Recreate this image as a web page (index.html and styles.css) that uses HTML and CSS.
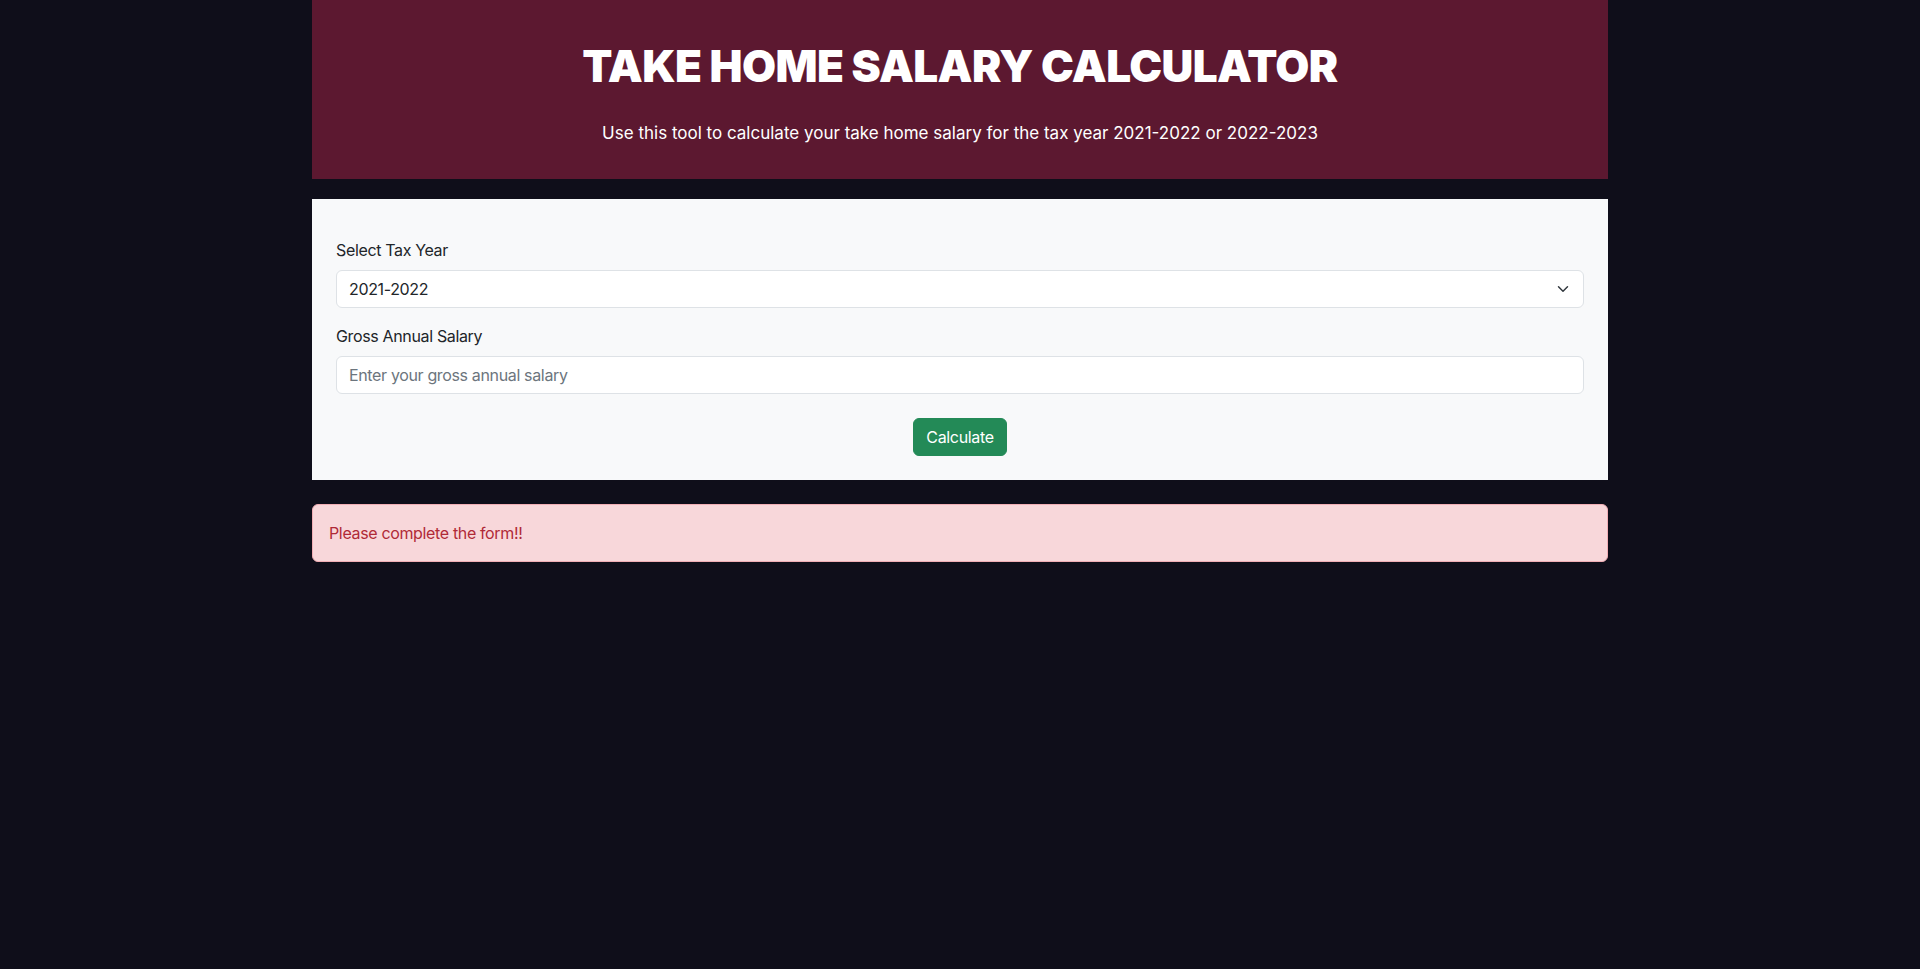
FILE: index.html
```html
<!DOCTYPE html>
<html lang="en">
<head>
<meta charset="utf-8">
<title>Take Home Salary Calculator</title>
<link rel="stylesheet" href="styles.css">
</head>
<body>
<div class="container">
  <header class="hero">
    <h1 class="hero-title">TAKE HOME SALARY CALCULATOR</h1>
    <p class="hero-sub">Use this tool to calculate your take home salary for the tax year 2021-2022 or 2022-2023</p>
  </header>

  <form class="calc-card">
    <div class="field">
      <label class="field-label" for="year">Select Tax Year</label>
      <select id="year" class="field-select">
        <option>2021-2022</option>
        <option>2022-2023</option>
      </select>
    </div>
    <div class="field">
      <label class="field-label" for="salary">Gross Annual Salary</label>
      <input id="salary" class="field-input" type="text" placeholder="Enter your gross annual salary">
    </div>
    <div class="actions">
      <button type="button" class="btn-calc">Calculate</button>
    </div>
  </form>

  <div class="alert">Please complete the form!!</div>
</div>
</body>
</html>
```

FILE: styles.css
```css
* { box-sizing: border-box; }

html, body {
  margin: 0;
  padding: 0;
}

body {
  background: #0f0e1a;
  font-family: Inter, "Noto Sans", "Liberation Sans", sans-serif;
  font-size: 16px;
  line-height: 1.5;
  letter-spacing: -0.35px;
  color: #212529;
  min-height: 969px;
}

.container {
  width: 1296px;
  margin: 0 auto;
}

.hero {
  background: #5c1830;
  color: #ffffff;
  text-align: center;
  padding: 40px 24px 32px;
  letter-spacing: normal;
}

.hero-title {
  margin: 0 0 27px;
  font-size: 44px;
  line-height: 1.2;
  font-weight: 900;
  letter-spacing: -0.6px;
}

.hero-sub {
  margin: 0;
  font-size: 17px;
  line-height: 27px;
  font-weight: 400;
}

.calc-card {
  margin-top: 20px;
  background: #f8f9fa;
  padding: 39px 24px 24px;
}

.field {
  margin-bottom: 16px;
}

.field-label {
  display: block;
  margin-bottom: 8px;
  font-size: 16px;
  line-height: 24px;
}

.field-select,
.field-input {
  display: block;
  width: 100%;
  height: 38px;
  padding: 6px 12px;
  font-family: inherit;
  font-size: 16px;
  line-height: 24px;
  letter-spacing: -0.35px;
  color: #212529;
  background-color: #ffffff;
  border: 1px solid #dee2e6;
  border-radius: 6px;
  outline: none;
}

.field-select {
  -webkit-appearance: none;
  appearance: none;
  padding-right: 36px;
  background-image: url("data:image/svg+xml,%3csvg xmlns='http://www.w3.org/2000/svg' viewBox='0 0 16 16'%3e%3cpath fill='none' stroke='%23343a40' stroke-linecap='round' stroke-linejoin='round' stroke-width='2' d='m2 5 6 6 6-6'/%3e%3c/svg%3e");
  background-repeat: no-repeat;
  background-position: right 12px center;
  background-size: 16px 12px;
}

.field-input::placeholder {
  color: #6c757d;
  opacity: 1;
}

.actions {
  display: flex;
  justify-content: center;
  padding-top: 8px;
}

.btn-calc {
  height: 38px;
  padding: 6px 12px;
  font-family: inherit;
  font-size: 16px;
  line-height: 24px;
  letter-spacing: -0.35px;
  color: #ffffff;
  background: #238a57;
  border: 1px solid #238a57;
  border-radius: 6px;
  cursor: pointer;
}

.alert {
  margin-top: 24px;
  padding: 16px;
  background: #f8d7da;
  border: 1px solid #f1aeb5;
  border-radius: 6px;
  color: #b02a37;
  font-size: 16px;
  line-height: 24px;
}
```
